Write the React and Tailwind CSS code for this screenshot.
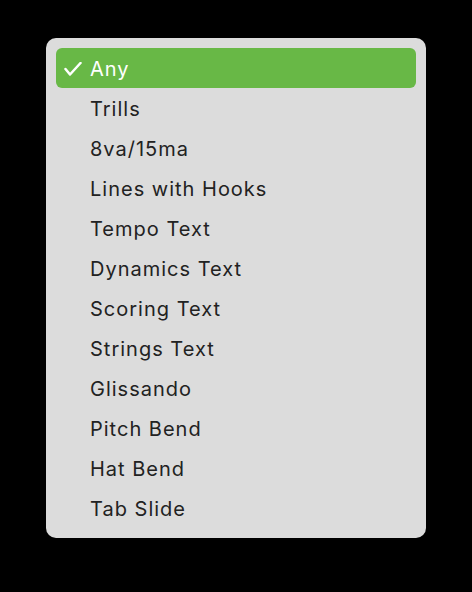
const items = [
  "Any",
  "Trills",
  "8va/15ma",
  "Lines with Hooks",
  "Tempo Text",
  "Dynamics Text",
  "Scoring Text",
  "Strings Text",
  "Glissando",
  "Pitch Bend",
  "Hat Bend",
  "Tab Slide",
];

export default function App() {
  return (
    <div className="w-[472px] h-[592px] bg-black pt-[38px] pl-[46px]" style={{ fontFamily: "Inter, 'Noto Sans', sans-serif" }}>
      <div className="w-[380px] rounded-[10px] bg-[#dcdcdc] p-[10px]">
        {items.map((item, i) => (
          <div
            key={item}
            className={
              i === 0
                ? "h-10 flex items-center rounded-[6px] bg-[#68b846] text-white"
                : "h-10 flex items-center text-[#222222]"
            }
          >
            <span className="w-[34px] flex items-center">
              {i === 0 && (
                <svg width="18" height="14" viewBox="0 0 18 14" fill="none" className="ml-[8px] mt-[1px]">
                  <path d="M1.5 7 L6 12.5 L16.5 1" stroke="white" strokeWidth="2.5" strokeLinecap="round" strokeLinejoin="round" />
                </svg>
              )}
            </span>
            <span className="text-[20px] tracking-[1px] pt-[1px]">{item}</span>
          </div>
        ))}
      </div>
    </div>
  );
}
